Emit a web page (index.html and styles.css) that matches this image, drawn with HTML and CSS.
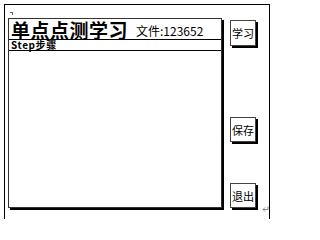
FILE: index.html
```html
<!DOCTYPE html>
<html>
<head>
<meta charset="utf-8">
<link rel="stylesheet" href="styles.css">
</head>
<body>
<div class="frame">
  <div class="mark"></div>
  <div class="main">
    <div class="panel">
      <div class="header">
        <span class="title">单点点测学习</span>
        <span class="file">文件:123652</span>
      </div>
      <div class="step">Step步骤</div>
      <div class="body"></div>
    </div>
    <div class="buttons">
      <div class="btn btn-learn">学习</div>
      <div class="btn btn-save">保存</div>
      <div class="btn btn-exit">退出</div>
    </div>
    <svg class="enter" width="7" height="6" viewBox="0 0 7 6">
      <path d="M6 0.5 V3.5 H1 M3 1.5 L1 3.5 L3 5.5" fill="none" stroke="#888" stroke-width="1"/>
    </svg>
  </div>
</div>
</body>
</html>
```
FILE: styles.css
```css
html, body {
  margin: 0;
  padding: 0;
  background: #fff;
}
body {
  width: 275px;
  height: 219px;
  overflow: hidden;
  font-family: "Noto Sans CJK SC", "Liberation Sans", sans-serif;
  color: #000;
}
.frame {
  box-sizing: border-box;
  margin: 4px 0 0 4px;
  width: 266px;
  height: 215px;
  border: 1px solid #000;
  border-bottom: none;
  padding: 7px 0 0 3px;
}
.mark {
  width: 2px;
  height: 2px;
  margin-left: 2px;
  margin-bottom: 3px;
  border-top: 1px solid #666;
  border-right: 1px solid #666;
}
.main {
  display: flex;
  align-items: flex-start;
}
.panel {
  box-sizing: border-box;
  width: 214px;
  height: 190px;
  border: 1px solid #333;
  box-shadow: 2px 2px 0 #000;
  display: flex;
  flex-direction: column;
}
.header {
  box-sizing: border-box;
  height: 21px;
  border-bottom: 1px solid #000;
  display: flex;
  align-items: center;
  padding-left: 2px;
  white-space: nowrap;
}
.title {
  font-size: 19px;
  font-weight: 700;
  line-height: 19px;
  letter-spacing: 0.5px;
}
.file {
  font-size: 12px;
  line-height: 12px;
  margin-left: 8px;
  margin-top: 3px;
}
.step {
  box-sizing: border-box;
  height: 11px;
  border-bottom: 1px solid #000;
  font-size: 10px;
  font-weight: 700;
  line-height: 10px;
  letter-spacing: 0.6px;
  padding-left: 2px;
  white-space: nowrap;
}
.body {
  flex: 1;
}
.buttons {
  margin-left: 8px;
  display: flex;
  flex-direction: column;
}
.btn {
  box-sizing: border-box;
  width: 26px;
  border: 1px solid #444;
  box-shadow: 2px 2px 0 #000;
  font-size: 11px;
  line-height: 12px;
  display: flex;
  align-items: center;
  justify-content: center;
  white-space: nowrap;
}
.btn-learn {
  margin-top: 2px;
  height: 26px;
}
.btn-save {
  margin-top: 71px;
  height: 25px;
}
.btn-exit {
  margin-top: 41px;
  height: 25px;
}
.enter {
  align-self: flex-end;
  margin-left: 6px;
  margin-bottom: -4px;
}
```
